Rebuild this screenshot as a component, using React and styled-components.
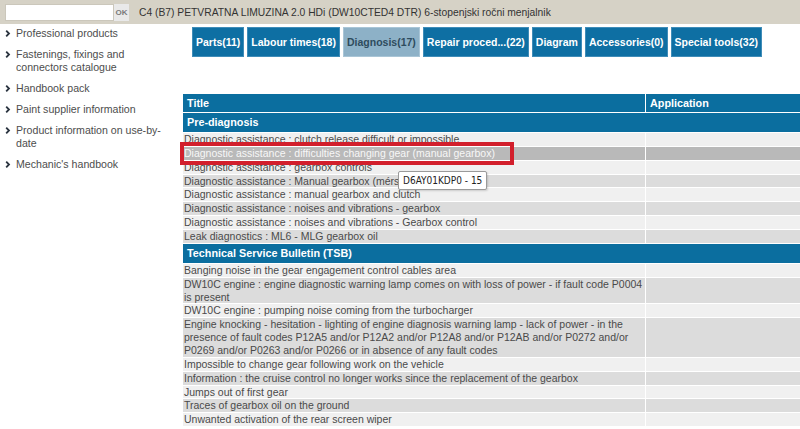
import React from "react";
import styled, { createGlobalStyle } from "styled-components";

const GlobalStyle = createGlobalStyle`
  html, body {
    margin: 0;
    padding: 0;
    background: #fff;
    overflow: hidden;
  }
  body {
    font-family: "Liberation Sans", Arial, sans-serif;
    color: #444;
  }
`;

const sideLinks = [
  "Professional products",
  "Fastenings, fixings and connectors catalogue",
  "Handbook pack",
  "Paint supplier information",
  "Product information on use-by-date",
  "Mechanic's handbook",
];

const tabs = [
  { label: "Parts(11)" },
  { label: "Labour times(18)" },
  { label: "Diagnosis(17)", active: true },
  { label: "Repair proced...(22)" },
  { label: "Diagram" },
  { label: "Accessories(0)" },
  { label: "Special tools(32)" },
];

const sections = [
  {
    title: "Pre-diagnosis",
    rows: [
      "Diagnostic assistance : clutch release difficult or impossible",
      "Diagnostic assistance : difficulties changing gear (manual gearbox)",
      "Diagnostic assistance : gearbox controls",
      "Diagnostic assistance : Manual gearbox (mérs 2014)",
      "Diagnostic assistance : manual gearbox and clutch",
      "Diagnostic assistance : noises and vibrations - gearbox",
      "Diagnostic assistance : noises and vibrations - Gearbox control",
      "Leak diagnostics : ML6 - MLG gearbox oil",
    ],
  },
  {
    title: "Technical Service Bulletin (TSB)",
    rows: [
      "Banging noise in the gear engagement control cables area",
      "DW10C engine : engine diagnostic warning lamp comes on with loss of power - if fault code P0004 is present",
      "DW10C engine : pumping noise coming from the turbocharger",
      "Engine knocking - hesitation - lighting of engine diagnosis warning lamp - lack of power - in the presence of fault codes P12A5 and/or P12A2 and/or P12A8 and/or P12AB and/or P0272 and/or P0269 and/or P0263 and/or P0266 or in absence of any fault codes",
      "Impossible to change gear following work on the vehicle",
      "Information : the cruise control no longer works since the replacement of the gearbox",
      "Jumps out of first gear",
      "Traces of gearbox oil on the ground",
      "Unwanted activation of the rear screen wiper",
    ],
  },
];

const TopBar = styled.header`
  display: flex;
  align-items: center;
  height: 24px;
  padding-left: 5px;
  background: #d6d2c6;
`;

const SearchBox = styled.input`
  box-sizing: border-box;
  width: 109px;
  height: 17px;
  margin: 0;
  border: 1px solid #cbc7bb;
  background: #fff;
  outline: none;
`;

const OkButton = styled.span`
  display: flex;
  align-items: center;
  justify-content: center;
  width: 15px;
  height: 17px;
  background: #e9e9e9;
  color: #7a7a7a;
  font-size: 8px;
  font-weight: bold;
`;

const Heading = styled.div`
  margin-left: 10px;
  font-size: 10.3px;
  color: #333;
`;

const Layout = styled.div`
  display: flex;
`;

const Sidebar = styled.ul`
  flex: 0 0 183px;
  margin: 0;
  padding: 3px 0 0 5px;
  list-style: none;
  box-sizing: border-box;
`;

const NavItem = styled.li`
  display: flex;
  align-items: flex-start;
  gap: 5px;
  margin-bottom: 8px;
  font-size: 10.6px;
  line-height: 13px;
  color: #4d4d4d;
`;

const NavText = styled.span`
  width: 160px;
`;

const Chevron = () => (
  <svg width="6" height="13" viewBox="0 0 6 13">
    <path d="M1.2 3.6 L4 6.5 L1.2 9.4" fill="none" stroke="#2b3440" strokeWidth="1.8" />
  </svg>
);

const Main = styled.main`
  flex: 1;
  min-width: 0;
`;

const TabRow = styled.nav`
  display: flex;
  gap: 3px;
  margin-top: 3px;
  padding-left: 9px;
`;

const Tab = styled.div`
  display: flex;
  align-items: center;
  height: 30px;
  padding: 0 3px;
  box-sizing: border-box;
  border: 1px solid ${(p) => (p.$active ? "#a9c5d6" : "#3f8cb8")};
  background: ${(p) => (p.$active ? "#8db1c7" : "#0e6fa3")};
  color: ${(p) => (p.$active ? "#2e4c5e" : "#fff")};
  font-size: 10.5px;
  font-weight: bold;
  white-space: nowrap;
`;

const TableWrap = styled.div`
  position: relative;
  margin-top: 36px;
`;

const Grid = styled.table`
  width: 620px;
  margin-left: -1px;
  table-layout: fixed;
  border-collapse: separate;
  border-spacing: 1px;
  font-size: 10.5px;
  line-height: 12.86px;
`;

const HeadCell = styled.td`
  padding: 3px 4px ${(p) => (p.$section ? "3px" : "2px")};
  background: #0b6e9f;
  color: #fff;
  font-weight: bold;
  font-size: 10.8px;
  line-height: 13px;
`;

const Cell = styled.td`
  padding: 0 1px;
  vertical-align: top;
  background: ${(p) => (p.$selected ? "#b9b9b9" : p.$even ? "#dcdcdc" : "#f0f0f0")};
  color: ${(p) => (p.$selected ? "#f7f7f7" : "#4a4a4a")};
`;

const Highlight = styled.div`
  position: absolute;
  left: -3px;
  top: 49px;
  width: 334px;
  height: 23px;
  box-sizing: border-box;
  border: 4px solid #d21f2c;
  pointer-events: none;
`;

const Tooltip = styled.div`
  position: absolute;
  left: 215px;
  top: 78px;
  padding: 2px 4px;
  border: 1px solid #9a9a9a;
  border-radius: 2px;
  background: #fff;
  color: #222;
  font-family: "DejaVu Sans Condensed", "DejaVu Sans", sans-serif;
  font-size: 10px;
  line-height: 13px;
  box-shadow: 1px 1px 2px rgba(0, 0, 0, 0.15);
`;

export default function App() {
  return (
    <>
      <GlobalStyle />
      <TopBar>
        <SearchBox />
        <OkButton>OK</OkButton>
        <Heading>C4 (B7) PETVRATNA LIMUZINA 2.0 HDi (DW10CTED4 DTR) 6-stopenjski ročni menjalnik</Heading>
      </TopBar>
      <Layout>
        <Sidebar>
          {sideLinks.map((t) => (
            <NavItem key={t}>
              <Chevron />
              <NavText>{t}</NavText>
            </NavItem>
          ))}
        </Sidebar>
        <Main>
          <TabRow>
            {tabs.map((t) => (
              <Tab key={t.label} $active={t.active}>
                {t.label}
              </Tab>
            ))}
          </TabRow>
          <TableWrap>
            <Grid>
              <colgroup>
                <col style={{ width: 462 }} />
                <col />
              </colgroup>
              <tbody>
                <tr>
                  <HeadCell>Title</HeadCell>
                  <HeadCell>Application</HeadCell>
                </tr>
                {sections.map((s, si) => (
                  <React.Fragment key={s.title}>
                    <tr>
                      <HeadCell $section colSpan={2}>{s.title}</HeadCell>
                    </tr>
                    {s.rows.map((r, i) => {
                      const selected = si === 0 && i === 1;
                      const even = i % 2 === 1;
                      return (
                        <tr key={r}>
                          <Cell $selected={selected} $even={even}>{r}</Cell>
                          <Cell $selected={selected} $even={even} />
                        </tr>
                      );
                    })}
                  </React.Fragment>
                ))}
              </tbody>
            </Grid>
            <Highlight />
            <Tooltip>D6AY01KDP0 - 15</Tooltip>
          </TableWrap>
        </Main>
      </Layout>
    </>
  );
}
